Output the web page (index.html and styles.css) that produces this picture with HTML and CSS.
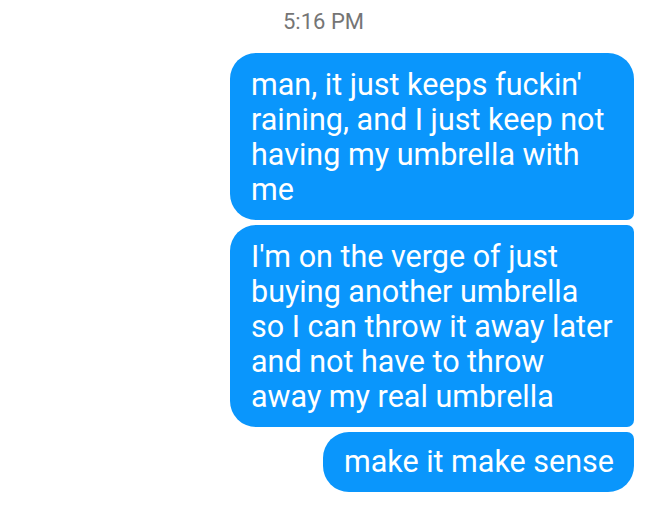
FILE: index.html
```html
<!DOCTYPE html>
<html>
<head>
<meta charset="utf-8">
<link rel="stylesheet" href="styles.css">
</head>
<body>
<div class="thread">
  <div class="time">5:16 PM</div>
  <div class="group">
    <div class="bubble first">man, it just keeps fuckin' raining, and I just keep not having my umbrella with me</div>
    <div class="bubble mid">I'm on the verge of just buying another umbrella so I can throw it away later and not have to throw away my real umbrella</div>
    <div class="bubble last">make it make sense</div>
  </div>
</div>
</body>
</html>
```
FILE: styles.css
```css
html, body {
  margin: 0;
  padding: 0;
  background: #ffffff;
}
body {
  width: 648px;
  height: 508px;
  overflow: hidden;
  font-family: Roboto, "Noto Sans", sans-serif;
}
.thread {
  display: flex;
  flex-direction: column;
  padding: 8px 14px 0 0;
}
.time {
  color: #757575;
  font-size: 22px;
  line-height: 28px;
  padding-left: 283px;
  margin-bottom: 17px;
}
.group {
  display: flex;
  flex-direction: column;
  align-items: flex-end;
  gap: 5px;
}
.bubble {
  background: #0a96fc;
  color: #ffffff;
  font-size: 30.5px;
  line-height: 35px;
  padding: 14px 20px 13px 21px;
  max-width: 363px;
  border-radius: 26px;
}
.first {
  width: 363px;
  border-bottom-right-radius: 7px;
}
.mid {
  width: 363px;
  border-top-right-radius: 7px;
  border-bottom-right-radius: 7px;
}
.last {
  padding-top: 12px;
  padding-bottom: 13px;
  border-top-right-radius: 7px;
}
```
